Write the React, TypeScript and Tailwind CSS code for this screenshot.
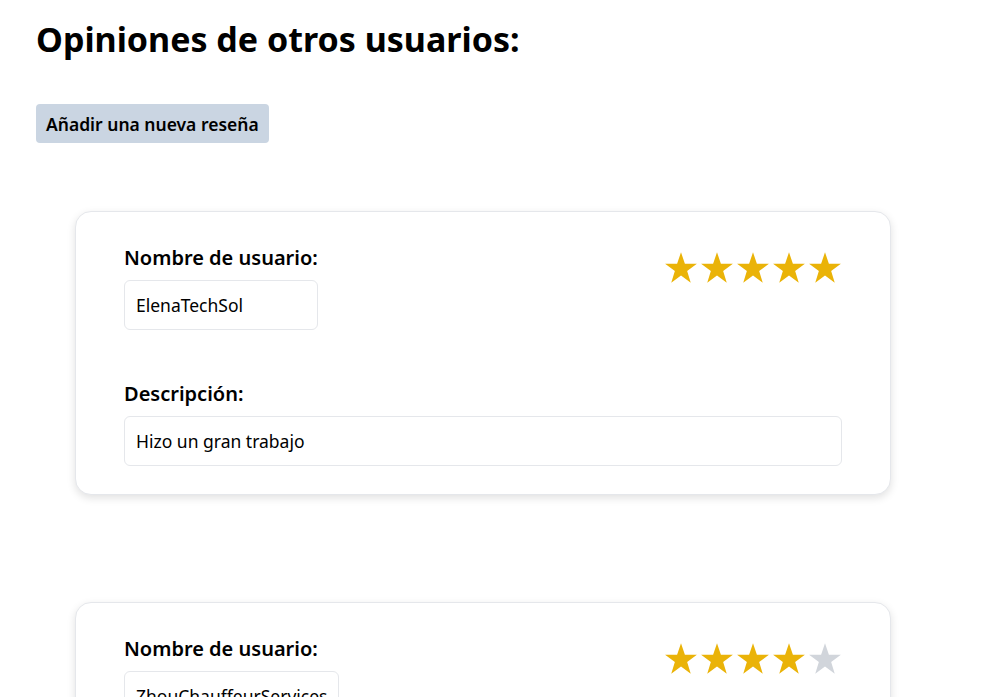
import React from 'react';

interface Review {
  user: string;
  rating: number;
  description: string;
}

const reviews: Review[] = [
  { user: 'ElenaTechSol', rating: 5, description: 'Hizo un gran trabajo' },
  { user: 'ZhouChauffeurServices', rating: 4, description: 'Muy puntual y amable' },
];

function Star({ filled }: { filled: boolean }) {
  return (
    <svg viewBox="0 0 24 24" className="w-[36px] h-[36px]" fill={filled ? '#eab308' : '#d1d5db'}>
      <polygon points="12,1.5 14.6,9.2 22.6,9.2 16.1,14 18.5,21.8 12,17 5.5,21.8 7.9,14 1.4,9.2 9.4,9.2" />
    </svg>
  );
}

function ReviewCard({ review }: { review: Review }) {
  return (
    <div className="w-[816px] ml-[39px] bg-white border border-gray-200 rounded-2xl shadow-[0_3px_8px_rgba(0,0,0,0.12)] px-12 pt-8 pb-7">
      <div className="flex justify-between items-start">
        <div className="flex flex-col">
          <label className="text-[20px] font-semibold leading-7 text-black">Nombre de usuario:</label>
          <div className="mt-2 border border-gray-200 rounded-md px-[11px] py-3 text-[17.5px] leading-6 text-black">
            {review.user}
          </div>
        </div>
        <div className="flex mt-[6px] mr-[-1px]">
          {[1, 2, 3, 4, 5].map((i) => (
            <Star key={i} filled={i <= review.rating} />
          ))}
        </div>
      </div>
      <div className="mt-[50px]">
        <label className="block text-[20px] font-semibold leading-7 text-black">Descripción:</label>
        <div className="mt-2 border border-gray-200 rounded-md px-[11px] py-3 text-[17.5px] leading-6 text-black">
          {review.description}
        </div>
      </div>
    </div>
  );
}

export default function App() {
  return (
    <div className="min-h-screen bg-white px-9 pt-4 font-['Noto_Sans',sans-serif] text-black">
      <h1 className="text-[34px] font-bold leading-[46px]">Opiniones de otros usuarios:</h1>
      <button className="block mt-[42px] h-[39px] bg-slate-300 rounded px-[10px] text-[17.5px] font-semibold leading-6 text-black">
        Añadir una nueva reseña
      </button>
      <div className="mt-[68px] flex flex-col gap-[107px]">
        {reviews.map((r) => (
          <ReviewCard key={r.user} review={r} />
        ))}
      </div>
    </div>
  );
}
